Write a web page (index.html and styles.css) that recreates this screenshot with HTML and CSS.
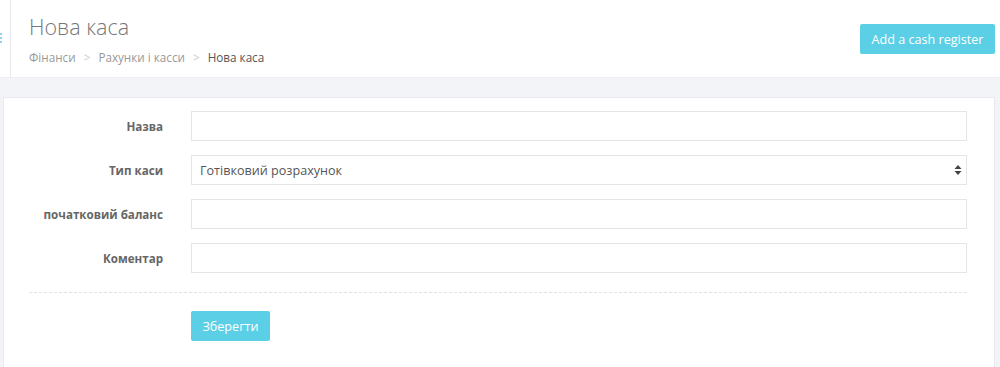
FILE: index.html
```html
<!DOCTYPE html>
<html lang="uk">
<head>
  <meta charset="UTF-8">
  <meta name="viewport" content="width=device-width, initial-scale=1.0">
  <title>Нова каса</title>
  <link rel="stylesheet" href="styles.css">
</head>
<body>
  <div class="topbar">
    <div class="side-strip">
      <svg class="side-icon" width="3" height="12" viewBox="0 0 3 12">
        <rect x="0" y="1" width="2" height="2" fill="#8fd3ee"/>
        <rect x="0" y="5" width="2" height="2" fill="#8fd3ee"/>
        <rect x="0" y="9" width="2" height="2" fill="#8fd3ee"/>
      </svg>
    </div>
    <div class="page-head">
      <div>
        <h1 class="page-title">Нова каса</h1>
        <div class="crumbs">
          <a href="#">Фінанси</a>
          <span class="sep">&gt;</span>
          <a href="#">Рахунки і касси</a>
          <span class="sep">&gt;</span>
          <span class="current">Нова каса</span>
        </div>
      </div>
      <button class="btn btn-info btn-add">Add a cash register</button>
    </div>
  </div>

  <div class="panel">
    <form class="form">
      <div class="row">
        <label>Назва</label>
        <input type="text" class="control">
      </div>
      <div class="row">
        <label>Тип каси</label>
        <div class="select-wrap">
          <select class="control">
            <option>Готівковий розрахунок</option>
            <option>Безготівковий розрахунок</option>
          </select>
          <svg class="select-arrows" width="8" height="12" viewBox="0 0 8 12">
            <path d="M4 1 L7.5 5 L0.5 5 Z" fill="#444"/>
            <path d="M4 11 L7.5 7 L0.5 7 Z" fill="#444"/>
          </svg>
        </div>
      </div>
      <div class="row">
        <label>початковий баланс</label>
        <input type="text" class="control">
      </div>
      <div class="row">
        <label>Коментар</label>
        <input type="text" class="control">
      </div>
      <div class="actions">
        <button type="button" class="btn btn-info btn-save">Зберегти</button>
      </div>
    </form>
  </div>
</body>
</html>
```

FILE: styles.css
```css
body {
  margin: 0;
  font-family: "Open Sans", sans-serif;
  background-color: #f3f4f8;
  color: #555;
}
.topbar {
  display: flex;
  height: 78px;
  background-color: white;
  border-bottom: 1px solid #eceef2;
  box-sizing: border-box;
}
.side-strip {
  width: 10px;
  border-right: 1px solid #e8e8e8;
  position: relative;
}
.side-icon {
  position: absolute;
  left: 0;
  top: 32px;
}
.page-head {
  flex: 1;
  display: flex;
  justify-content: space-between;
  align-items: flex-start;
  padding: 0 5px 0 18px;
}
.page-title {
  margin: 12px 0 0;
  font-size: 21.5px;
  font-weight: 300;
  line-height: 30px;
  color: #777;
}
.crumbs {
  margin-top: 6px;
  font-size: 11.7px;
  line-height: 18px;
  color: #999;
}
.crumbs a {
  color: #999;
  text-decoration: none;
}
.crumbs .sep {
  color: #ccc;
  margin: 0 5px;
}
.crumbs .current {
  color: #555;
}
.btn {
  font-family: "Open Sans", sans-serif;
  border: none;
  border-radius: 2px;
  cursor: pointer;
  font-size: 12.6px;
  height: 30px;
  padding: 0 12px;
}
.btn-info {
  background-color: #5bcfe5;
  color: white;
}
.btn-info:hover {
  background-color: #46bdd3;
}
.btn-add {
  margin-top: 24px;
  width: 135px;
  padding: 0;
}
.panel {
  margin: 19px 5px 0 3px;
  background-color: white;
  border: 1px solid #e8eaef;
  padding: 13px 27px 30px 25px;
}
.row {
  display: grid;
  grid-template-columns: 134px 1fr;
  column-gap: 28px;
  align-items: center;
  margin-bottom: 14px;
}
.row label {
  text-align: right;
  font-size: 11.6px;
  font-weight: 700;
  color: #666;
}
.control {
  width: 100%;
  height: 30px;
  box-sizing: border-box;
  border: 1px solid #e5e5e5;
  border-radius: 0;
  background-color: white;
  font-family: "Open Sans", sans-serif;
  font-size: 12.6px;
  color: #555;
  padding: 0 9px;
  outline: none;
}
.select-wrap {
  position: relative;
}
select.control {
  appearance: none;
  -webkit-appearance: none;
  padding-left: 8px;
}
.select-arrows {
  position: absolute;
  right: 5px;
  top: 9px;
  pointer-events: none;
}
.actions {
  border-top: 1px dashed #e3e3e3;
  margin-top: 19px;
  padding: 18px 0 0 162px;
}
.btn-save {
  width: 79px;
  padding: 0;
}
```
